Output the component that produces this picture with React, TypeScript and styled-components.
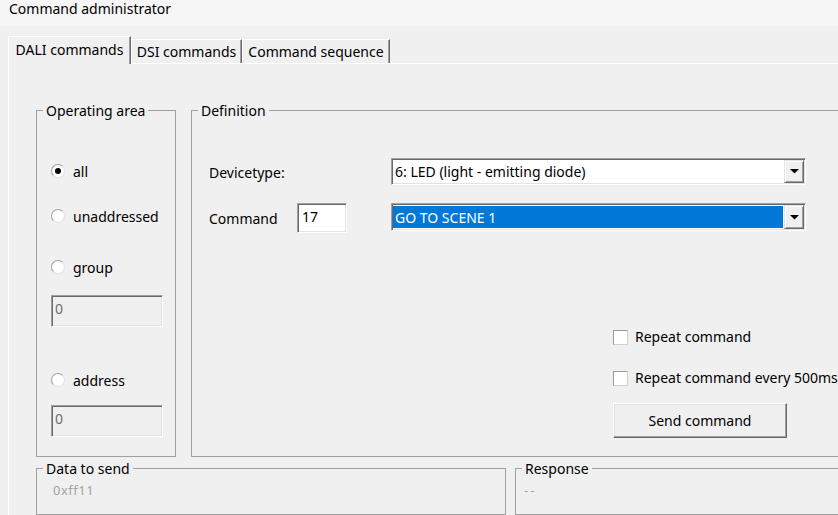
import React from "react";
import styled, { createGlobalStyle } from "styled-components";

const Global = createGlobalStyle`
  html, body { margin: 0; padding: 0; background: #f0f0f0; overflow: hidden; }
  #root { width: 838px; height: 515px; overflow: hidden; }
  * { box-sizing: border-box; }
`;

const Window = styled.div`
  width: 838px;
  height: 515px;
  overflow: hidden;
  background: #f0f0f0;
  font-family: "Noto Sans", "Open Sans", sans-serif;
  font-size: 14px;
  line-height: 18px;
  color: #000;
  display: flex;
  flex-direction: column;
`;

const TitleBar = styled.div`
  height: 26px;
  flex: none;
  padding-left: 9px;
  line-height: 17px;
  background: #f6f6f6;
`;

const TabStrip = styled.div`
  margin-top: 10px;
  height: 27px;
  flex: none;
  display: flex;
  align-items: flex-end;
  padding-left: 8px;
`;

const Tab = styled.div<{ $w: number; $active?: boolean }>`
  width: ${(p) => p.$w}px;
  height: ${(p) => (p.$active ? 28 : 24)}px;
  margin-bottom: ${(p) => (p.$active ? -1 : 0)}px;
  padding-bottom: ${(p) => (p.$active ? 2 : 0)}px;
  border-top: 1px solid #fff;
  border-left: 1px solid #fff;
  border-right: 1px solid #696969;
  box-shadow: inset -1px 0 #a0a0a0;
  background: #f0f0f0;
  display: flex;
  align-items: center;
  justify-content: center;
  white-space: nowrap;
  position: relative;
  z-index: ${(p) => (p.$active ? 1 : 0)};
`;

const Panel = styled.div`
  flex: 1;
  margin-left: 8px;
  border-top: 1px solid #fff;
  border-left: 1px solid #fff;
  padding: 46px 0 0 27px;
  display: flex;
  flex-direction: column;
`;

const Row = styled.div<{ $gap: number; $top?: number }>`
  display: flex;
  gap: ${(p) => p.$gap}px;
  margin-top: ${(p) => p.$top ?? 0}px;
  flex: none;
`;

const Group = styled.div<{ $w: number; $h: number }>`
  position: relative;
  width: ${(p) => p.$w}px;
  height: ${(p) => p.$h}px;
  flex: none;
  border: 1px solid #a0a0a0;
  display: flex;
  flex-direction: column;
`;

const GroupTitle = styled.span`
  position: absolute;
  top: -9px;
  left: 6px;
  padding: 0 3px;
  background: #f0f0f0;
  white-space: nowrap;
`;

const RadioRow = styled.label<{ $top: number }>`
  display: flex;
  align-items: center;
  gap: 8px;
  height: 20px;
  margin-top: ${(p) => p.$top}px;
  padding-left: 14px;
  & > span:last-child {
    padding-top: 1px;
  }
`;

const RadioCircle = styled.span<{ $checked?: boolean }>`
  width: 14px;
  height: 14px;
  flex: none;
  border-radius: 50%;
  background: #fff;
  border: 1px solid;
  border-color: #a0a0a0 #e3e3e3 #e3e3e3 #a0a0a0;
  display: flex;
  align-items: center;
  justify-content: center;
  &::after {
    content: "";
    width: 6px;
    height: 6px;
    border-radius: 50%;
    background: ${(p) => (p.$checked ? "#000" : "transparent")};
  }
`;

const sunken = `
  border: 1px solid;
  border-color: #a0a0a0 #fff #fff #a0a0a0;
  box-shadow: inset 1px 1px #696969, inset -1px -1px #e3e3e3;
`;

const DisabledField = styled.div<{ $top: number }>`
  ${sunken}
  margin-top: ${(p) => p.$top}px;
  margin-left: 14px;
  width: 112px;
  height: 32px;
  background: #f0f0f0;
  color: #6d6d6d;
  padding: 4px 0 0 3px;
`;

const DefGrid = styled.div`
  margin-top: 47px;
  padding-left: 17px;
  display: grid;
  grid-template-columns: 88px 50px 44px 415px;
  grid-template-rows: 27px 30px;
  row-gap: 18px;
  align-items: center;
`;

const FieldLabel = styled.span<{ $col: number; $row: number }>`
  grid-column: ${(p) => p.$col};
  grid-row: ${(p) => p.$row};
  padding-top: 2px;
  white-space: nowrap;
`;

const NumberField = styled.div`
  ${sunken}
  grid-column: 2;
  grid-row: 2;
  height: 30px;
  background: #fff;
  padding: 4px 0 0 4px;
`;

const Combo = styled.div<{ $row: number; $h: number }>`
  ${sunken}
  grid-column: 4;
  grid-row: ${(p) => p.$row};
  align-self: start;
  height: ${(p) => p.$h}px;
  background: #fff;
  display: flex;
  padding: 1px;
`;

const ComboValue = styled.div<{ $selected?: boolean }>`
  flex: 1;
  display: flex;
  align-items: center;
  padding-left: ${(p) => (p.$selected ? 2 : 2)}px;
  padding-top: 1px;
  margin: ${(p) => (p.$selected ? "1px 1px 1px 0" : "0")};
  background: ${(p) => (p.$selected ? "#0078d7" : "transparent")};
  color: ${(p) => (p.$selected ? "#fff" : "#000")};
  white-space: nowrap;
`;

const DropButton = styled.div`
  width: 20px;
  background: #f0f0f0;
  border: 1px solid;
  border-color: #e3e3e3 #696969 #696969 #e3e3e3;
  box-shadow: inset 1px 1px #fff, inset -1px -1px #a0a0a0;
  display: flex;
  align-items: center;
  justify-content: center;
`;

const Options = styled.div`
  margin-left: 421px;
  margin-top: 95px;
  display: flex;
  flex-direction: column;
`;

const CheckRow = styled.label<{ $top: number }>`
  display: flex;
  align-items: center;
  gap: 7px;
  height: 18px;
  margin-top: ${(p) => p.$top}px;
  white-space: nowrap;
`;

const CheckBox = styled.span`
  width: 15px;
  height: 15px;
  flex: none;
  background: #fff;
  border: 1px solid;
  border-color: #9a9a9a #d0d0d0 #d0d0d0 #9a9a9a;
`;

const PushButton = styled.div`
  margin-top: 16px;
  width: 174px;
  height: 35px;
  background: #f0f0f0;
  border: 1px solid;
  border-color: #fff #696969 #696969 #fff;
  box-shadow: inset -1px -1px #a0a0a0, inset 1px 1px #e3e3e3;
  display: flex;
  align-items: center;
  justify-content: center;
`;

const OutputText = styled.div<{ $left: number; $spacing: number }>`
  margin-top: 13px;
  padding-left: ${(p) => p.$left}px;
  font-size: 13px;
  line-height: 16px;
  letter-spacing: ${(p) => p.$spacing}px;
  color: #a3a3a3;
`;

const Arrow = () => (
  <svg width="9" height="5" viewBox="0 0 9 5">
    <polygon points="0,0 9,0 4.5,4.5" fill="#000" />
  </svg>
);

export default function App() {
  return (
    <Window>
      <Global />
      <TitleBar>Command administrator</TitleBar>
      <TabStrip>
        <Tab $w={123} $active>DALI commands</Tab>
        <Tab $w={111}>DSI commands</Tab>
        <Tab $w={148}>Command sequence</Tab>
      </TabStrip>
      <Panel>
        <Row $gap={15}>
          <Group $w={140} $h={347}>
            <GroupTitle>Operating area</GroupTitle>
            <RadioRow $top={50}>
              <RadioCircle $checked />
              <span>all</span>
            </RadioRow>
            <RadioRow $top={25}>
              <RadioCircle />
              <span>unaddressed</span>
            </RadioRow>
            <RadioRow $top={31}>
              <RadioCircle />
              <span>group</span>
            </RadioRow>
            <DisabledField $top={18}>0</DisabledField>
            <RadioRow $top={43}>
              <RadioCircle />
              <span>address</span>
            </RadioRow>
            <DisabledField $top={15}>0</DisabledField>
          </Group>
          <Group $w={700} $h={347}>
            <GroupTitle>Definition</GroupTitle>
            <DefGrid>
              <FieldLabel $col={1} $row={1}>Devicetype:</FieldLabel>
              <Combo $row={1} $h={27}>
                <ComboValue>6: LED (light - emitting diode)</ComboValue>
                <DropButton>
                  <Arrow />
                </DropButton>
              </Combo>
              <FieldLabel $col={1} $row={2}>Command</FieldLabel>
              <NumberField>17</NumberField>
              <Combo $row={2} $h={28}>
                <ComboValue $selected>GO TO SCENE 1</ComboValue>
                <DropButton>
                  <Arrow />
                </DropButton>
              </Combo>
            </DefGrid>
            <Options>
              <CheckRow $top={0}>
                <CheckBox />
                Repeat command
              </CheckRow>
              <CheckRow $top={23}>
                <CheckBox />
                Repeat command every 500ms
              </CheckRow>
              <PushButton>Send command</PushButton>
            </Options>
          </Group>
        </Row>
        <Row $gap={9} $top={11}>
          <Group $w={470} $h={47}>
            <GroupTitle>Data to send</GroupTitle>
            <OutputText $left={16} $spacing={0.5}>0xff11</OutputText>
          </Group>
          <Group $w={400} $h={47}>
            <GroupTitle>Response</GroupTitle>
            <OutputText $left={8} $spacing={2}>--</OutputText>
          </Group>
        </Row>
      </Panel>
    </Window>
  );
}
